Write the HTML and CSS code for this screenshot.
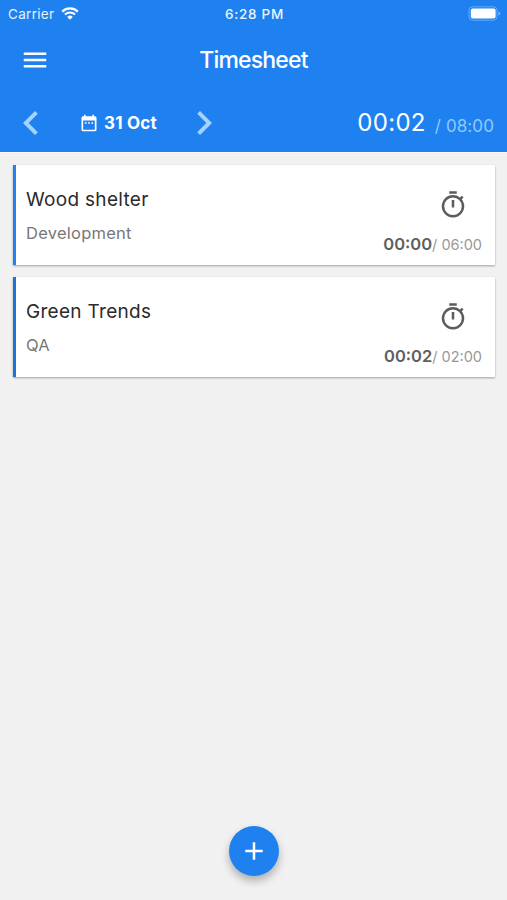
FILE: index.html
```html
<!DOCTYPE html>
<html lang="en">
<head>
<meta charset="utf-8">
<title>Timesheet</title>
<link rel="stylesheet" href="styles.css">
</head>
<body>
<header class="header">
  <div class="status">
    <div class="carrier"><span>Carrier</span>
      <svg class="wifi" viewBox="0 0 18 13"><path d="M1.2 4.6a11.2 11.2 0 0 1 15.6 0M4 7.5a7.2 7.2 0 0 1 10 0" fill="none" stroke="currentColor" stroke-width="2.2"/><path d="M9 12.8 6.2 9.9a4 4 0 0 1 5.6 0z" fill="currentColor"/></svg>
    </div>
    <span class="clock">6:28 PM</span>
    <svg class="battery" viewBox="0 0 33 15"><rect x="1" y=".8" width="28" height="13.4" rx="3.5" fill="none" stroke="#62adf8" stroke-width="1"/><rect x="2.8" y="2.6" width="24.8" height="9.8" rx="2" fill="#fff"/><path d="M30.5 5.2q3 2.3 0 4.6z" fill="#8bc4fb"/></svg>
  </div>
  <div class="nav">
    <svg class="icon" viewBox="0 0 24 24"><path d="M3 18h18v-2H3zm0-5h18v-2H3zm0-7v2h18V6z"/></svg>
    <h1 class="title">Timesheet</h1>
  </div>
  <div class="day">
    <svg class="chevron" viewBox="0 0 24 24"><path d="M15.41 7.41 14 6l-6 6 6 6 1.41-1.41L10.83 12z"/></svg>
    <div class="date">
      <svg class="calendar" viewBox="0 0 24 24"><path d="M9 11H7v2h2zm4 0h-2v2h2zm4 0h-2v2h2zm2-7h-1V2h-2v2H8V2H6v2H5a2 2 0 0 0-2 2v14a2 2 0 0 0 2 2h14a2 2 0 0 0 2-2V6a2 2 0 0 0-2-2zm0 16H5V9h14z"/></svg>
      <span class="date-text">31 Oct</span>
    </div>
    <svg class="chevron" viewBox="0 0 24 24"><path d="M10 6 8.59 7.41 13.17 12l-4.58 4.59L10 18l6-6z"/></svg>
    <div class="total"><span class="total-now">00:02</span><span class="total-goal">/ 08:00</span></div>
  </div>
</header>
<main class="list">
  <article class="card">
    <div class="info"><h2 class="name">Wood shelter</h2><p class="task">Development</p></div>
    <div class="timing">
      <svg class="timer" viewBox="0 0 24 24"><path d="M15 1H9v2h6zm-4 13h2V8h-2zm8.03-6.61 1.42-1.42c-.43-.51-.9-.99-1.41-1.41l-1.42 1.42A8.96 8.96 0 0 0 12 4a9 9 0 1 0 7.03 3.39zM12 20a7 7 0 1 1 0-14 7 7 0 0 1 0 14z"/></svg>
      <div class="hours"><b class="spent">00:00</b><span class="goal">/ 06:00</span></div>
    </div>
  </article>
  <article class="card card-alt">
    <div class="info"><h2 class="name">Green Trends</h2><p class="task">QA</p></div>
    <div class="timing">
      <svg class="timer" viewBox="0 0 24 24"><path d="M15 1H9v2h6zm-4 13h2V8h-2zm8.03-6.61 1.42-1.42c-.43-.51-.9-.99-1.41-1.41l-1.42 1.42A8.96 8.96 0 0 0 12 4a9 9 0 1 0 7.03 3.39zM12 20a7 7 0 1 1 0-14 7 7 0 0 1 0 14z"/></svg>
      <div class="hours"><b class="spent">00:02</b><span class="goal">/ 02:00</span></div>
    </div>
  </article>
</main>
<footer class="footer">
  <button class="fab" aria-label="Add entry"><svg class="icon" viewBox="0 0 24 24"><path d="M19 13h-6v6h-2v-6H5v-2h6V5h2v6h6z"/></svg></button>
</footer>
</body>
</html>
```
FILE: styles.css
```css
* { box-sizing: border-box; }
body {
  margin: 0;
  height: 900px;
  display: flex;
  flex-direction: column;
  background: #f1f1f1;
  font-family: Inter, "Liberation Sans", sans-serif;
  overflow: hidden;
}
svg { display: block; fill: currentColor; flex: none; }
h1, h2, p { margin: 0; font-weight: 400; white-space: nowrap; }
.header { height: 152px; background: #1f81f0; color: #fff; box-shadow: 0 1px 0 #fafafa; flex: none; }
.status {
  height: 27px;
  display: grid;
  grid-template-columns: 1fr auto 1fr;
  align-items: center;
  padding: 0 6px 0 8px;
  font-size: 13.5px;
  line-height: 18px;
}
.carrier { display: flex; align-items: center; gap: 7px; color: #e4f3ff; letter-spacing: .3px; }
.wifi { width: 18px; height: 13px; color: #fff; }
.clock { font-weight: 500; letter-spacing: .7px; color: #e9f5ff; }
.battery { width: 33px; height: 15px; justify-self: end; }
.nav {
  height: 65px;
  display: grid;
  grid-template-columns: 1fr auto 1fr;
  align-items: center;
  padding: 0 20px;
}
.icon { width: 30px; height: 30px; }
.title { font-size: 23px; font-weight: 500; line-height: 30px; letter-spacing: -.8px; }
.day { height: 60px; display: flex; align-items: center; padding: 2px 13px 0 7px; }
.chevron { width: 48px; height: 48px; color: #a5d3ff; }
.date { width: 125px; display: flex; align-items: center; gap: 5px; padding-left: 24px; }
.calendar { width: 20px; height: 20px; }
.date-text { font-size: 17px; line-height: 22px; font-weight: 700; letter-spacing: .2px; white-space: nowrap; }
.total { margin-left: auto; display: flex; align-items: flex-start; white-space: nowrap; gap: 9px; }
.total-now { font-size: 24px; line-height: 32px; letter-spacing: .3px; }
.total-goal { padding-top: 8px; font-size: 17px; line-height: 22px; color: #91c8fd; letter-spacing: .1px; }
.list { flex: 1; padding: 13px 12px 0 13px; display: flex; flex-direction: column; gap: 12px; }
.card {
  height: 100px;
  display: flex;
  justify-content: space-between;
  background: #fff;
  border-left: 3px solid #2382ef;
  box-shadow: 0 1px 2px rgba(0, 0, 0, .34);
}
.card-alt { border-left-color: #1976d2; }
.info { padding: 22px 0 0 10px; }
.name { font-size: 19px; line-height: 25px; letter-spacing: .3px; color: #2b2b2b; }
.task { margin-top: 10px; font-size: 16.5px; line-height: 22px; letter-spacing: .25px; color: #777; }
.timing { padding: 24px 13px 0 0; display: flex; flex-direction: column; align-items: flex-end; }
.timer { width: 30px; height: 30px; margin: 1px 14px 0 0; color: #5c5c5c; }
.hours { display: flex; align-items: baseline; margin-top: 13px; line-height: 22px; white-space: nowrap; }
.spent { font-size: 16.5px; font-weight: 600; color: #5e5e5e; }
.goal { font-size: 14.5px; color: #999; }
.footer { height: 74px; flex: none; display: flex; justify-content: center; }
.fab {
  width: 50px;
  height: 50px;
  margin: 0;
  padding: 0;
  border: 0;
  border-radius: 50%;
  display: flex;
  align-items: center;
  justify-content: center;
  color: #fff;
  background: #1f81f0;
  box-shadow: 0 5px 8px rgba(0, 0, 0, .28);
}
```
